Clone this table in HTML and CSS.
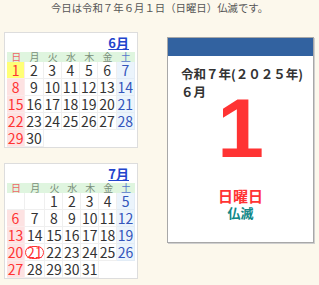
FILE: index.html
```html
<!DOCTYPE html>
<html lang="ja">
<head>
<meta charset="utf-8">
<link rel="stylesheet" href="styles.css">
</head>
<body>
<p class="today-line">今日は令和７年６月１日（日曜日）仏滅です。</p>
<div class="main">
  <div class="side">
    <div class="mcal">
      <div class="mtitle"><span>6月</span></div>
      <div class="grid">
        <div class="w sun">日</div><div class="w">月</div><div class="w">火</div><div class="w">水</div><div class="w">木</div><div class="w">金</div><div class="w sat">土</div>
        <div class="d sun today">1</div><div class="d">2</div><div class="d">3</div><div class="d">4</div><div class="d">5</div><div class="d">6</div><div class="d sat">7</div>
        <div class="d sun">8</div><div class="d">9</div><div class="d">10</div><div class="d">11</div><div class="d">12</div><div class="d">13</div><div class="d sat">14</div>
        <div class="d sun">15</div><div class="d">16</div><div class="d">17</div><div class="d">18</div><div class="d">19</div><div class="d">20</div><div class="d sat">21</div>
        <div class="d sun">22</div><div class="d">23</div><div class="d">24</div><div class="d">25</div><div class="d">26</div><div class="d">27</div><div class="d sat">28</div>
        <div class="d sun">29</div><div class="d">30</div><div class="d e"></div><div class="d e"></div><div class="d e"></div><div class="d e"></div><div class="d e"></div>
      </div>
    </div>
    <div class="mcal">
      <div class="mtitle"><span>7月</span></div>
      <div class="grid">
        <div class="w sun">日</div><div class="w">月</div><div class="w">火</div><div class="w">水</div><div class="w">木</div><div class="w">金</div><div class="w sat">土</div>
        <div class="d"></div><div class="d"></div><div class="d">1</div><div class="d">2</div><div class="d">3</div><div class="d">4</div><div class="d sat">5</div>
        <div class="d sun">6</div><div class="d">7</div><div class="d">8</div><div class="d">9</div><div class="d">10</div><div class="d">11</div><div class="d sat">12</div>
        <div class="d sun">13</div><div class="d">14</div><div class="d">15</div><div class="d">16</div><div class="d">17</div><div class="d">18</div><div class="d sat">19</div>
        <div class="d sun">20</div><div class="d hol"><span>21</span></div><div class="d">22</div><div class="d">23</div><div class="d">24</div><div class="d">25</div><div class="d sat">26</div>
        <div class="d sun">27</div><div class="d">28</div><div class="d">29</div><div class="d">30</div><div class="d">31</div><div class="d e"></div><div class="d e"></div>
      </div>
    </div>
  </div>
  <div class="daycard">
    <div class="dc-head"></div>
    <div class="dc-body">
      <div class="era">令和７年(２０２５年)<br>６月</div>
      <div class="bignum">1</div>
      <div class="wday">日曜日</div>
      <div class="rokuyo">仏滅</div>
    </div>
  </div>
</div>
</body>
</html>
```
FILE: styles.css
```css
html, body {
  margin: 0;
  padding: 0;
}
body {
  background: #fcf8ec;
  font-family: "Noto Sans CJK JP", "Noto Sans", sans-serif;
  color: #333;
  width: 319px;
  height: 285px;
  overflow: hidden;
}
.today-line {
  margin: 1px 0 0;
  text-align: center;
  font-size: 10.4px;
  line-height: 14px;
  color: #555;
}
.main {
  display: flex;
  align-items: flex-start;
  gap: 29px;
  margin: 17px 0 0 4px;
}
.side {
  display: flex;
  flex-direction: column;
  gap: 15px;
}
.mcal {
  width: 134px;
  box-sizing: border-box;
  background: #fff;
  border: 1px solid #ddd;
  padding: 0 1px 0 2px;
}
.mtitle {
  height: 19px;
  text-align: right;
  padding-right: 7px;
  font-size: 13px;
  line-height: 19px;
  font-weight: bold;
}
.mtitle span {
  color: #2244cc;
  text-decoration: underline;
}
.grid {
  display: grid;
  grid-template-columns: repeat(7, 1fr);
  width: 128px;
}
.w {
  height: 10px;
  line-height: 10px;
  font-size: 10px;
  text-align: center;
  background: #dff5df;
  color: #7a8f7a;
}
.w.sun { color: #ee6666; }
.w.sat { color: #5577cc; }
.d {
  height: 17px;
  line-height: 17px;
  font-size: 14px;
  text-align: center;
  box-sizing: border-box;
  border-right: 1px solid #efefef;
  border-bottom: 1px solid #efefef;
  color: #333;
}
.d.e { border-color: transparent; }
.d.sun {
  background: #fde2e2;
  color: #ff3333;
  border-color: #fbeaea;
}
.d.sat {
  background: #ebf4fc;
  color: #3355bb;
  border-color: #e2ecf6;
}
.d.today { background: #ffff77; color: #ff3333; }
.d.hol span {
  display: inline-block;
  color: #ff3333;
  border: 1px solid #ff3333;
  border-radius: 7px;
  line-height: 11px;
  padding: 0 1px;
}
.daycard {
  margin-top: 5px;
  width: 147px;
  height: 206px;
  box-sizing: border-box;
  background: #fff;
  border: 1px solid #a8a8a8;
  box-shadow: 1px 1px 0 #cfcfcf;
}
.dc-head {
  height: 18px;
  background: #3262a0;
}
.dc-body {
  padding: 9px 0 0 13px;
}
.era {
  font-size: 12.5px;
  font-weight: bold;
  line-height: 18px;
  color: #333;
}
.bignum {
  margin: -3px 0 0 -13px;
  text-align: center;
  font-family: "Liberation Sans", Arial, sans-serif;
  font-weight: bold;
  font-size: 84px;
  line-height: 60px;
  color: #ff3333;
}
.wday {
  margin: 29px 0 0 -13px;
  text-align: center;
  font-size: 15px;
  line-height: 18px;
  font-weight: bold;
  color: #ff3333;
}
.rokuyo {
  margin-left: -13px;
  text-align: center;
  font-size: 13px;
  line-height: 15px;
  font-weight: bold;
  color: #118888;
}
```
